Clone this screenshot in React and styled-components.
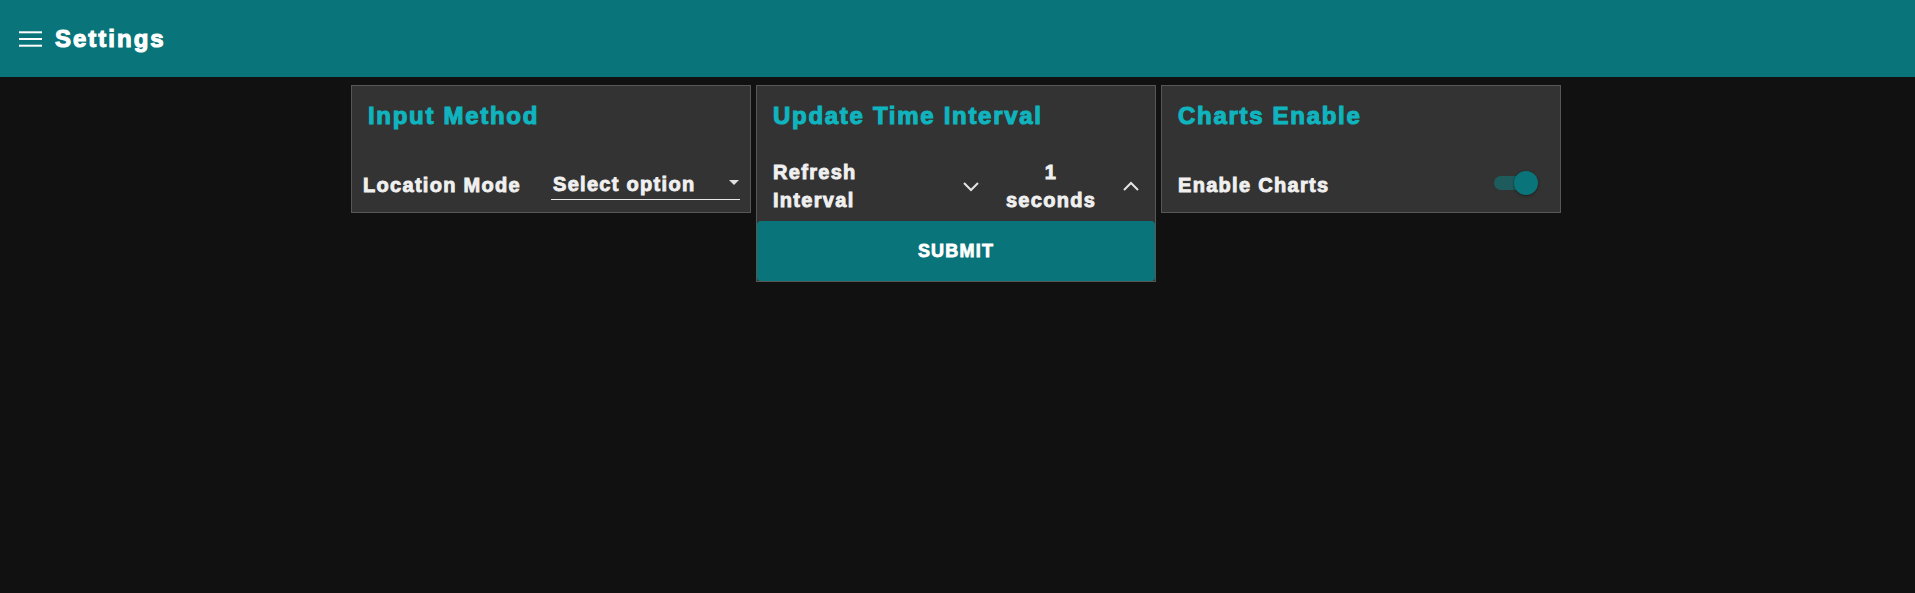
import React from 'react'
import styled, { createGlobalStyle } from 'styled-components'

const GlobalStyle = createGlobalStyle`
body{
margin:0;
background:#111111;
font-family:"Liberation Sans", Arial, sans-serif;
}
`
const teal = '#097479'

const Header = styled.header`
height:77px;
background:${teal};
display:flex;
align-items:center;
padding-left:19px;
gap:13px;
`
const HeaderTitle = styled.h1`
margin:0;
color:#ffffff;
font-size:24px;
font-weight:700;
letter-spacing:2px;
-webkit-text-stroke:1.1px #ffffff;
`
const Cards = styled.main`
display:flex;
justify-content:center;
align-items:flex-start;
gap:5px;
margin-top:8px;
padding-right:3px;
`
const Card = styled.section`
width:400px;
box-sizing:border-box;
background:#333333;
border:1px solid #575757;
display:flex;
flex-direction:column;
`
const Title = styled.h2`
margin:0;
padding:16px 16px 0;
font-size:24px;
line-height:28px;
font-weight:700;
letter-spacing:1.7px;
color:#0fb4bf;
-webkit-text-stroke:1.1px #0fb4bf;
`
const Row = styled.div`
margin-top:28px;
min-height:54px;
display:flex;
align-items:center;
justify-content:space-between;
padding:0 ${p => p.$right || 16}px 0 ${p => p.$left || 16}px;
`
const Label = styled.span`
color:#f0f0f0;
font-size:20px;
line-height:28px;
font-weight:700;
letter-spacing:1.3px;
-webkit-text-stroke:0.9px #f0f0f0;
`
const Select = styled.div`
width:189px;
height:30px;
box-sizing:border-box;
border-bottom:1px solid #e8e8e8;
display:flex;
align-items:flex-start;
justify-content:space-between;
padding-left:2px;
`
const Caret = styled.span`
width:0;
height:0;
margin-top:10px;
border-left:5px solid transparent;
border-right:5px solid transparent;
border-top:5px solid #e0e0e0;
margin-right:1px;
`
const IntervalGrid = styled.div`
display:grid;
grid-template-columns:186px 24px 136px 24px;
align-items:center;
margin-top:28px;
padding-left:16px;
`
const Value = styled(Label)`
text-align:center;
`
const Chevron = styled.svg`
width:24px;
height:24px;
`
const Submit = styled.button`
margin:7px 0 0;
height:60px;
border:none;
border-radius:4px;
background:${teal};
color:#ffffff;
font-family:inherit;
font-size:18px;
font-weight:700;
letter-spacing:1.2px;
-webkit-text-stroke:0.8px #ffffff;
cursor:pointer;
`
const Toggle = styled.div`
position:relative;
width:44px;
height:24px;
margin-top:-4px;
margin-right:3px;
`
const Track = styled.div`
position:absolute;
left:0;
top:5px;
width:34px;
height:14px;
border-radius:7px;
background:#1e5b5d;
`
const Thumb = styled.div`
position:absolute;
right:0;
top:0;
width:24px;
height:24px;
border-radius:50%;
background:${teal};
box-shadow:0 1px 3px rgba(0,0,0,0.4);
`

function MenuIcon(){
  return(
    <svg width="23" height="16" viewBox="0 0 23 16">
      <rect x="0" y="0.3" width="23" height="2" fill="#fff"/>
      <rect x="0" y="7" width="23" height="2" fill="#fff"/>
      <rect x="0" y="13.7" width="23" height="2" fill="#fff"/>
    </svg>
  )
}

function ChevronIcon({up}){
  return(
    <Chevron viewBox="0 0 24 24">
      <polyline
        points={up ? '5,16 12,9 19,16' : '5,9 12,16 19,9'}
        fill="none" stroke="#e4e4e4" strokeWidth="2"/>
    </Chevron>
  )
}

export default function App(){
  return(
    <>
      <GlobalStyle/>
      <Header>
        <MenuIcon/>
        <HeaderTitle>Settings</HeaderTitle>
      </Header>
      <Cards>
        <Card>
          <Title>Input Method</Title>
          <Row $left={11} $right={10}>
            <Label>Location Mode</Label>
            <Select>
              <Label>Select option</Label>
              <Caret/>
            </Select>
          </Row>
        </Card>
        <Card>
          <Title>Update Time Interval</Title>
          <IntervalGrid>
            <Label>Refresh<br/>Interval</Label>
            <ChevronIcon/>
            <Value>1<br/>seconds</Value>
            <ChevronIcon up/>
          </IntervalGrid>
          <Submit>SUBMIT</Submit>
        </Card>
        <Card>
          <Title>Charts Enable</Title>
          <Row $right={19}>
            <Label>Enable Charts</Label>
            <Toggle>
              <Track/>
              <Thumb/>
            </Toggle>
          </Row>
        </Card>
      </Cards>
    </>
  )
}
